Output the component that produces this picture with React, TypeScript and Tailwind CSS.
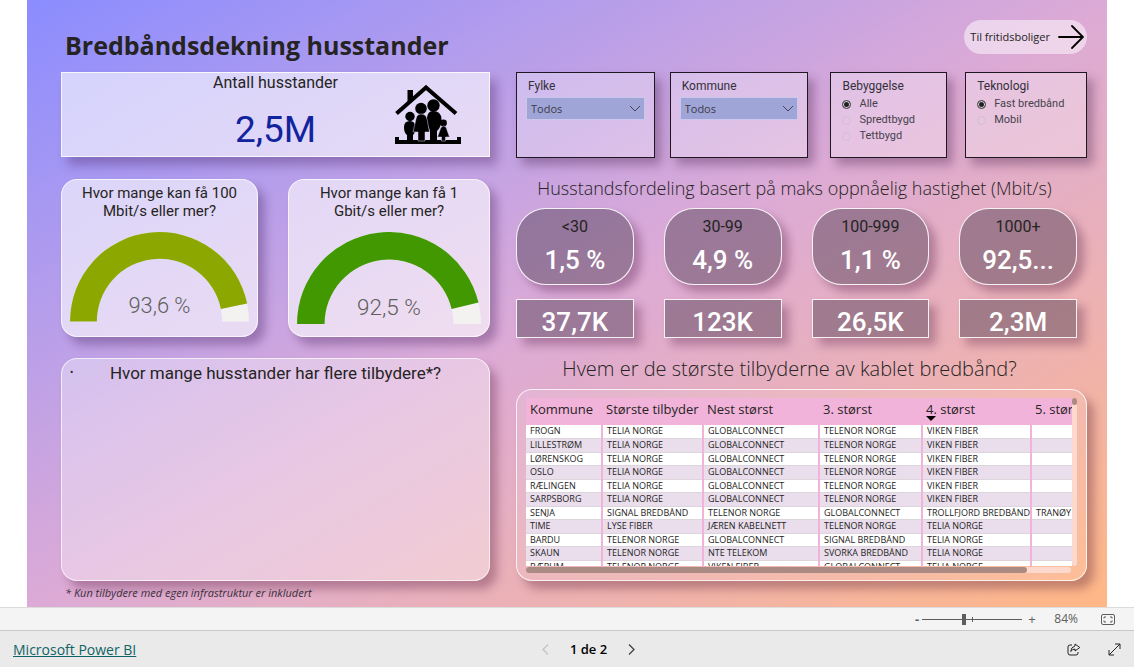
import React from 'react';

interface SlicerProps {
  title: string;
  children: React.ReactNode;
}

interface GaugeProps {
  title: string;
  label: string;
  value: number;
  color: string;
}

const PROVIDERS: string[][] = [
  ['FROGN', 'TELIA NORGE', 'GLOBALCONNECT', 'TELENOR NORGE', 'VIKEN FIBER', ''],
  ['LILLESTRØM', 'TELIA NORGE', 'GLOBALCONNECT', 'TELENOR NORGE', 'VIKEN FIBER', ''],
  ['LØRENSKOG', 'TELIA NORGE', 'GLOBALCONNECT', 'TELENOR NORGE', 'VIKEN FIBER', ''],
  ['OSLO', 'TELIA NORGE', 'GLOBALCONNECT', 'TELENOR NORGE', 'VIKEN FIBER', ''],
  ['RÆLINGEN', 'TELIA NORGE', 'GLOBALCONNECT', 'TELENOR NORGE', 'VIKEN FIBER', ''],
  ['SARPSBORG', 'TELIA NORGE', 'GLOBALCONNECT', 'TELENOR NORGE', 'VIKEN FIBER', ''],
  ['SENJA', 'SIGNAL BREDBÅND', 'TELENOR NORGE', 'GLOBALCONNECT', 'TROLLFJORD BREDBÅND', 'TRANØY'],
  ['TIME', 'LYSE FIBER', 'JÆREN KABELNETT', 'TELENOR NORGE', 'TELIA NORGE', ''],
  ['BARDU', 'TELENOR NORGE', 'GLOBALCONNECT', 'SIGNAL BREDBÅND', 'TELIA NORGE', ''],
  ['SKAUN', 'TELENOR NORGE', 'NTE TELEKOM', 'SVORKA BREDBÅND', 'TELIA NORGE', ''],
  ['BÆRUM', 'TELENOR NORGE', 'VIKEN FIBER', 'GLOBALCONNECT', 'TELIA NORGE', ''],
];

const COLUMNS = ['Kommune', 'Største tilbyder', 'Nest størst', '3. størst', '4. størst', '5. størst'];

const SPEEDS = [
  { range: '<30', share: '1,5 %', count: '37,7K' },
  { range: '30-99', share: '4,9 %', count: '123K' },
  { range: '100-999', share: '1,1 %', count: '26,5K' },
  { range: '1000+', share: '92,5...', count: '2,3M' },
];

const Slicer: React.FC<SlicerProps> = ({ title, children }) => (
  <div
    role="group"
    aria-labelledby={title}
    className="min-w-0 border border-[#1f1722] bg-white/30 px-[9px] pt-[5px] shadow-[6px_7px_10px_rgba(60,20,60,0.35)]"
  >
    <h3 id={title} className="px-[2px] text-[12px] leading-4 text-[#33303a]">
      {title}
    </h3>
    {children}
  </div>
);

const Dropdown: React.FC<{ label: string }> = ({ label }) => (
  <div className="relative mt-[3px]">
    <select
      aria-label={label}
      className="block h-[23px] w-full appearance-none border border-[#c9c8ec] bg-[#a0a5d8] px-1 font-['Open_Sans',sans-serif] text-[11px] leading-4 text-[#3c3b48]"
    >
      <option>Todos</option>
    </select>
    <svg className="pointer-events-none absolute top-2 right-1 h-[7px] w-3" viewBox="0 0 12 7" fill="none" stroke="#444456">
      <path d="M1 1l5 5 5-5" />
    </svg>
  </div>
);

const Radios: React.FC<{ name: string; options: string[] }> = ({ name, options }) => (
  <div className="mt-[2px] flex flex-col pl-[2px]">
    {options.map((option, i) => (
      <label key={option} className="flex items-center gap-2 text-[11px] leading-4 text-[#46424c]">
        <input
          type="radio"
          name={name}
          defaultChecked={i === 0}
          className="h-[9px] w-[9px] appearance-none rounded-full border border-[#d0bfd2] checked:border-[#555] checked:bg-[#222] checked:shadow-[inset_0_0_0_1px_#e6cfe8]"
        />
        {option}
      </label>
    ))}
  </div>
);

const Gauge: React.FC<GaugeProps> = ({ title, label, value, color }) => {
  const angle = Math.PI * (1 - value);
  const point = (r: number) => `${90 + r * Math.cos(angle)} ${90 - r * Math.sin(angle)}`;
  return (
    <section className="flex flex-col items-center rounded-2xl border border-white/70 bg-white/60 px-2 pt-1 shadow-[7px_8px_10px_rgba(60,20,80,0.32)]">
      <h2 className="w-[168px] text-center text-[15px] leading-[18px] text-[#252423]">{title}</h2>
      <svg className="mt-3 w-full" viewBox="0 0 180 91" role="img" aria-label={label}>
        <path d="M0 90A90 90 0 0 1 180 90H153A63 63 0 0 0 27 90Z" fill="#f3f2f1" />
        <path d={`M0 90A90 90 0 0 1 ${point(90)}L${point(63)}A63 63 0 0 0 27 90Z`} fill={color} />
        <text x="90" y="81" textAnchor="middle" className="fill-[#605e5c] text-[22px] font-light">
          {label}
        </text>
      </svg>
    </section>
  );
};

const FamilyIcon = () => (
  <svg className="h-[60px] w-[66px]" viewBox="0 0 66 60">
    <path d="M1.500 28.500L31 2.500L61 28.500" fill="none" stroke="#000" strokeWidth="4" />
    <path d="M12.500 5H18V12L12.500 17Z" />
    <path d="M0 52H4V55H62V52H66V59H0Z" />
    <circle cx="15" cy="31.500" r="4.700" />
    <path d="M15 36Q20 36 20.500 42Q20.500 48 18 50V56H12V50Q9 48 9 42Q9 36 15 36Z" />
    <circle cx="38.500" cy="20.500" r="6.200" />
    <path d="M38 26Q46 26 46.500 34Q46.500 42 42 46V56H35V46L32 38Q31 26 38 26Z" />
    <circle cx="26" cy="23.500" r="5.800" />
    <path d="M26 29Q31 29 32 34L34.500 47H30V56H23V47H18L21 34Q22 29 26 29Z" stroke="#ddd2f7" strokeWidth=".5" />
    <circle cx="48.500" cy="38" r="3.400" />
    <path d="M48.500 41Q51.500 41 52 45L54.500 52H50.500V56H46.500V52H42.500L45 45Q46 41 48.500 41Z" stroke="#ddd2f7" strokeWidth=".5" />
  </svg>
);

const ProviderTable = () => (
  <section className="flex flex-1 flex-col rounded-2xl border border-white/80 bg-white/10 px-[9px] pt-2 pb-[7px] shadow-[7px_8px_10px_rgba(90,30,50,0.35)]">
    <div className="flex">
      <div className="h-[168px] min-w-0 flex-1 overflow-hidden">
        <table className="w-[650px] table-fixed border-collapse text-left font-['Open_Sans',sans-serif]">
          <colgroup>
            <col className="w-[76px]" />
            <col className="w-[101px]" />
            <col className="w-[116px]" />
            <col className="w-[103px]" />
            <col className="w-[109px]" />
            <col />
          </colgroup>
          <thead>
            <tr className="bg-[#f2b3da] text-[13px] text-[#252423]">
              {COLUMNS.map((column) => (
                <th key={column} className="h-[27px] p-0 pb-[5px] pl-1 leading-4 font-normal whitespace-nowrap">
                  <span className="relative">
                    {column}
                    {column === '4. størst' && (
                      <svg className="absolute top-4 left-0 h-[5px] w-[10px]" viewBox="0 0 10 5">
                        <path d="M0 0H10L5 5Z" />
                      </svg>
                    )}
                  </span>
                </th>
              ))}
            </tr>
          </thead>
          <tbody>
            {PROVIDERS.map((row) => (
              <tr key={row[0]} className="h-[13px] bg-white text-[#252423] even:h-[14px] even:bg-[#eadeed]">
                {row.map((cell, i) => (
                  <td
                    key={i}
                    className="border-r-2 border-b border-r-[#f2b3da] border-b-[#dcd6dc] p-0 pl-1 text-[9px] leading-[12px] whitespace-nowrap"
                  >
                    {cell}
                  </td>
                ))}
              </tr>
            ))}
          </tbody>
        </table>
      </div>
      <div className="w-[5px] rounded-full bg-[#fcd9cc]">
        <div className="h-[7px] rounded-full bg-[#ad8b84]" />
      </div>
    </div>
    <div className="mt-px mr-[6px] rounded-full bg-[#fcd9cc]">
      <div className="h-[6px] w-[92%] rounded-full bg-[#ab8a84]" />
    </div>
  </section>
);

const StatusBar = () => (
  <div className="flex h-[23px] items-center justify-end border-t border-[#dcdcdc] bg-[#f4f4f4] pr-[19px] font-['Open_Sans',sans-serif] text-[#605e5c]">
    <button type="button" aria-label="Zoom out" className="w-[10px] text-[13px] leading-4 font-bold">
      -
    </button>
    <div className="relative flex h-3 w-[100px] items-center">
      <input
        type="range"
        aria-label="Zoom"
        defaultValue={42}
        className="h-px w-full appearance-none bg-[#605e5c] [&::-webkit-slider-thumb]:h-[11px] [&::-webkit-slider-thumb]:w-[4px] [&::-webkit-slider-thumb]:appearance-none [&::-webkit-slider-thumb]:bg-[#605e5c]"
      />
      <span className="pointer-events-none absolute left-1/2 h-[5px] w-px bg-[#605e5c]" />
    </div>
    <button type="button" aria-label="Zoom in" className="w-5 text-[13px] leading-4">
      +
    </button>
    <span className="w-9 text-right text-[12px] leading-4">84%</span>
    <button type="button" aria-label="Fit to page" className="ml-[23px]">
      <svg className="h-[11px] w-[14px]" viewBox="0 0 14 11" fill="none" stroke="#605e5c">
        <rect x=".5" y=".5" width="13" height="10" rx="1.500" />
        <path d="M3 4.500V3H5M9 3H11V4.500M11 6.500V8H9M5 8H3V6.500" />
      </svg>
    </button>
  </div>
);

const Footer = () => (
  <footer className="grid h-[37px] grid-cols-[528fr_95px_485fr] items-center border-t border-[#c8c8c8] bg-[#eaeaea] px-[13px] pt-px font-['Open_Sans',sans-serif]">
    <a href="#powerbi" className="text-[14px] text-[#0f6466] underline">
      Microsoft Power BI
    </a>
    <nav className="flex items-center justify-between">
      <button type="button" aria-label="Previous page">
        <svg className="h-[11px] w-[9px]" viewBox="0 0 9 11" fill="none" stroke="#c4c4c4" strokeWidth="1.300">
          <path d="M7 .5L2 5.500L7 10.500" />
        </svg>
      </button>
      <span className="text-[13px] font-semibold text-black">1 de 2</span>
      <button type="button" aria-label="Next page">
        <svg className="h-[11px] w-[9px]" viewBox="0 0 9 11" fill="none" stroke="#444" strokeWidth="1.300">
          <path d="M2 .5L7 5.500L2 10.500" />
        </svg>
      </button>
    </nav>
    <div className="flex items-center justify-end gap-[27px]">
      <button type="button" aria-label="Share">
        <svg className="h-[13px] w-[14px]" viewBox="0 0 14 13" fill="none" stroke="#252423" strokeLinejoin="round">
          <path d="M5 2H3Q1 2 1 4V10Q1 12 3 12H9Q11 12 11 10V9" />
          <path d="M8 1L12.800 4.500L8 8V6Q5.500 6 3.700 8.500Q4 4 8 3Z" />
        </svg>
      </button>
      <button type="button" aria-label="Full screen">
        <svg className="h-[13px] w-[13px]" viewBox="0 0 13 13" fill="none" stroke="#252423">
          <path d="M1 12L12 1M7 1H12V6M1 7V12H6" />
        </svg>
      </button>
    </div>
  </footer>
);

const App: React.FC = () => {
  return (
    <div className="flex min-h-screen flex-col bg-white font-[Roboto,sans-serif]">
      <main className="mx-[27px] flex flex-1 flex-col bg-linear-to-br from-[#8b8cff] via-[#dcaad6] to-[#ffb785] pt-5 pr-5 pb-[6px] pl-[34px]">
        <header className="flex items-start justify-between">
          <h1 className="pt-2 pl-1 font-['Open_Sans',sans-serif] text-[25px] leading-[34px] font-bold text-[#252423]">
            Bredbåndsdekning husstander
          </h1>
          <button
            type="button"
            className="flex h-[34px] items-center gap-2 rounded-full bg-white/50 pr-[3px] pl-[6px] font-['Open_Sans',sans-serif] text-[11px] text-[#252423]"
          >
            Til fritidsboliger
            <svg className="h-6 w-[26px]" viewBox="0 0 26 24" fill="none" stroke="#000" strokeWidth="1.800" strokeLinecap="round">
              <path d="M1 12H25M14 1L25 12L14 23" />
            </svg>
          </button>
        </header>

        <div className="mt-[10px] grid flex-1 grid-cols-[429fr_571fr] gap-[26px]">
          <div className="flex min-w-0 flex-col">
            <section className="relative flex h-[85px] flex-col items-center border border-white/80 bg-white/60 shadow-[7px_8px_10px_rgba(60,20,80,0.32)]">
              <h2 className="text-[16px] leading-5 text-[#252423]">Antall husstander</h2>
              <p className="mt-3 text-[37px] leading-[50px] text-[#12239e]">2,5M</p>
              <div className="absolute top-3 right-7">
                <FamilyIcon />
              </div>
            </section>

            <div className="mt-[22px] grid h-[158px] grid-cols-[197fr_202fr] gap-[30px]">
              <Gauge title="Hvor mange kan få 100 Mbit/s eller mer?" label="93,6 %" value={0.936} color="#8ca800" />
              <Gauge title="Hvor mange kan få 1 Gbit/s eller mer?" label="92,5 %" value={0.925} color="#419800" />
            </div>

            <section className="mt-[21px] flex-1 rounded-2xl border border-white/70 bg-white/35 pt-1 shadow-[7px_8px_10px_rgba(90,30,60,0.35)]">
              <h2 className="relative text-center text-[17px] leading-5 text-[#252423]">
                <span className="absolute left-2 text-[10px]">•</span>
                Hvor mange husstander har flere tilbydere*?
              </h2>
            </section>
          </div>

          <div className="flex min-w-0 flex-col">
            <div className="grid h-[86px] grid-cols-[293fr_257fr] gap-[22px]">
              <div className="grid grid-cols-2 gap-[15px]">
                <Slicer title="Fylke">
                  <Dropdown label="Fylke" />
                </Slicer>
                <Slicer title="Kommune">
                  <Dropdown label="Kommune" />
                </Slicer>
              </div>
              <div className="grid grid-cols-[117fr_122fr] gap-[18px]">
                <Slicer title="Bebyggelse">
                  <Radios name="bebyggelse" options={['Alle', 'Spredtbygd', 'Tettbygd']} />
                </Slicer>
                <Slicer title="Teknologi">
                  <Radios name="teknologi" options={['Fast bredbånd', 'Mobil']} />
                </Slicer>
              </div>
            </div>

            <h2 className="mt-4 mb-[6px] pr-[14px] text-center font-['Open_Sans',sans-serif] text-[18px] leading-7 font-light whitespace-nowrap text-[#252423]">
              Husstandsfordeling basert på maks oppnåelig hastighet (Mbit/s)
            </h2>

            <div className="grid grid-cols-4 gap-x-[30px] gap-y-[14px] pr-[10px]">
              {SPEEDS.map((speed) => (
                <div
                  key={speed.range}
                  className="flex h-[77px] flex-col items-center rounded-[30px] border border-white/90 bg-[#4b3c50]/45 pt-2 shadow-[7px_7px_9px_rgba(70,20,60,0.32)]"
                >
                  <span className="text-[16px] leading-5 text-[#252423]">{speed.range}</span>
                  <span className="mt-[7px] text-[26px] leading-8 font-medium text-white">{speed.share}</span>
                </div>
              ))}
              {SPEEDS.map((speed) => (
                <div
                  key={speed.count}
                  className="flex h-[39px] items-center justify-center border border-white/90 bg-[#4b3c50]/45 pt-[6px] text-[26px] leading-8 font-medium text-white shadow-[7px_7px_9px_rgba(70,20,60,0.32)]"
                >
                  {speed.count}
                </div>
              ))}
            </div>

            <h2 className="mt-[17px] mb-[6px] pr-6 text-center font-['Open_Sans',sans-serif] text-[20px] leading-7 font-light whitespace-nowrap text-[#252423]">
              Hvem er de største tilbyderne av kablet bredbånd?
            </h2>

            <ProviderTable />
          </div>
        </div>

        <p className="mt-1 pl-1 font-['Open_Sans',sans-serif] text-[11px] leading-4 text-[#3a2f3c] italic">
          * Kun tilbydere med egen infrastruktur er inkludert
        </p>
      </main>
      <StatusBar />
      <Footer />
    </div>
  );
};

export default App;
